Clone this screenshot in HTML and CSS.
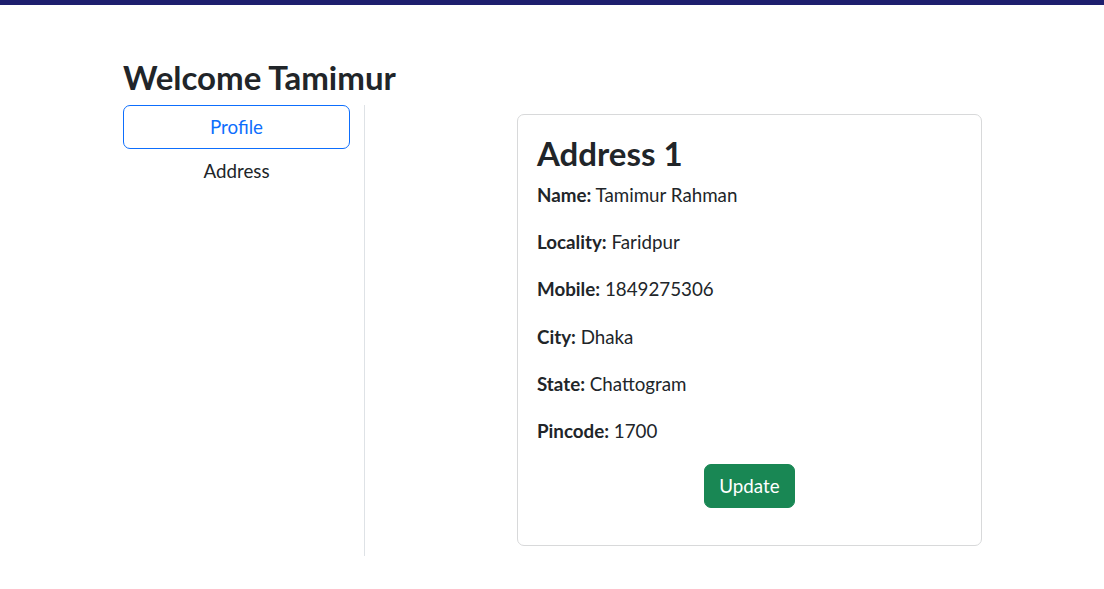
FILE: index.html
```html
<!DOCTYPE html>
<html lang="en">
<head>
<meta charset="utf-8">
<title>Welcome Tamimur</title>
<link rel="stylesheet" href="styles.css">
</head>
<body>
<div class="topbar"></div>
<main class="page">
  <h1 class="welcome">Welcome Tamimur</h1>
  <div class="layout">
    <nav class="sidebar">
      <a class="nav-link active" href="#">Profile</a>
      <a class="nav-link" href="#">Address</a>
    </nav>
    <section class="content">
      <div class="card">
        <h2 class="card-title">Address 1</h2>
        <p><b>Name:</b> Tamimur Rahman</p>
        <p><b>Locality:</b> Faridpur</p>
        <p><b>Mobile:</b> 1849275306</p>
        <p><b>City:</b> Dhaka</p>
        <p><b>State:</b> Chattogram</p>
        <p><b>Pincode:</b> 1700</p>
        <div class="actions"><button class="btn-update" type="button">Update</button></div>
      </div>
    </section>
  </div>
</main>
</body>
</html>
```

FILE: styles.css
```css
* { box-sizing: border-box; }
html, body { margin: 0; padding: 0; background: #fff; }
body {
  font-family: Lato, "Noto Sans", sans-serif;
  font-size: 18.75px;
  line-height: 1.5;
  color: #212529;
}
.topbar { height: 5px; background: #1e1f6e; }
.page { padding: 53px 0 0 123px; }
.welcome {
  margin: 0;
  font-size: 33px;
  font-weight: 700;
  line-height: 1.2;
}
.layout { display: flex; margin-top: 7px; }
.sidebar {
  width: 242px;
  height: 451px;
  padding-right: 14px;
  border-right: 1px solid #dee2e6;
  display: flex;
  flex-direction: column;
}
.nav-link {
  display: block;
  text-align: center;
  text-decoration: none;
  color: #212529;
  padding: 7px 18px;
  line-height: 28px;
  border: 1px solid transparent;
  border-radius: 7px;
}
.nav-link.active { color: #0d6efd; border-color: #0d6efd; }
.content { padding: 9px 0 0 152px; }
.card {
  width: 465px;
  border: 1px solid #d8d9da;
  border-radius: 7px;
  padding: 19px 19px;
}
.card-title {
  margin: 0 0 8px;
  font-size: 33px;
  font-weight: 700;
  line-height: 1.2;
}
.card p { margin: 0 0 19px; }
.card b { font-weight: 700; }
.actions { display: flex; justify-content: center; }
.btn-update {
  font: inherit;
  color: #fff;
  background: #198754;
  border: 1px solid #198754;
  border-radius: 7px;
  padding: 7px 14px;
  line-height: 28px;
  margin-bottom: 18px;
}
```
